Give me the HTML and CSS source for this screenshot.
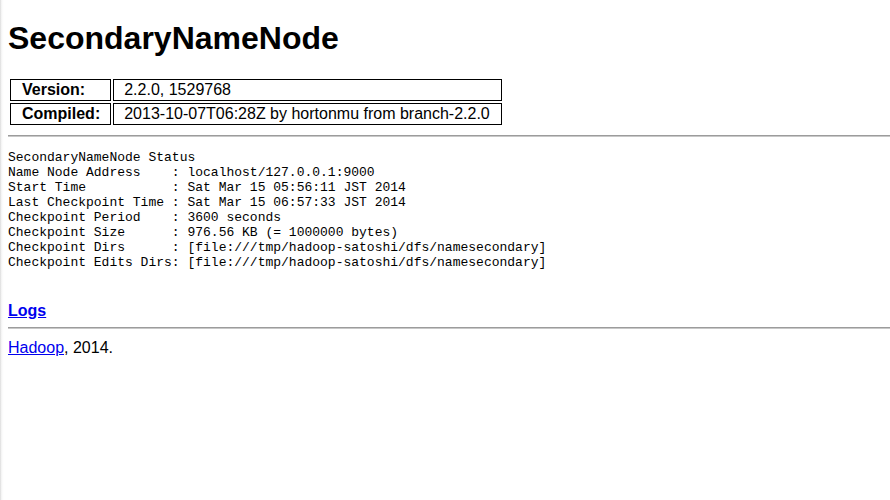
FILE: index.html
```html
<!DOCTYPE html>
<html>
<head>
<meta charset="utf-8">
<title>Hadoop SecondaryNameNode</title>
<link rel="stylesheet" href="styles.css">
</head>
<body>
<h1 class="title">SecondaryNameNode</h1>
<table class="info">
  <tr><td class="col1">Version:</td><td class="col2">2.2.0, 1529768</td></tr>
  <tr><td class="col1">Compiled:</td><td class="col2">2013-10-07T06:28Z by hortonmu from branch-2.2.0</td></tr>
</table>
<hr class="rule">
<pre class="status">SecondaryNameNode Status
Name Node Address    : localhost/127.0.0.1:9000
Start Time           : Sat Mar 15 05:56:11 JST 2014
Last Checkpoint Time : Sat Mar 15 06:57:33 JST 2014
Checkpoint Period    : 3600 seconds
Checkpoint Size      : 976.56 KB (= 1000000 bytes)
Checkpoint Dirs      : [file:///tmp/hadoop-satoshi/dfs/namesecondary]
Checkpoint Edits Dirs: [file:///tmp/hadoop-satoshi/dfs/namesecondary]</pre>
<h3 class="logs"><a href="#">Logs</a></h3>
<hr class="rule rule-foot">
<span class="footer"><a href="#">Hadoop</a>, 2014.</span>
</body>
</html>
```
FILE: styles.css
```css
html {
  background: #fff linear-gradient(to right, #d8d8d8 0, #efefef 1px, #fafafa 2px, #ffffff 4px);
}
body {
  margin: 8px 0 8px 8px;
  font-family: "Liberation Sans", Arial, Helvetica, sans-serif;
  font-size: 16px;
  color: #000;
}
a {
  color: #0000ee;
  text-decoration: underline;
}
.title {
  font-size: 32px;
  line-height: 37px;
  font-weight: bold;
  margin: 12px 0 20px;
}
.info {
  border-collapse: separate;
  border-spacing: 2px;
  border: 0;
}
.info td {
  border: 1px solid #000;
  line-height: 18px;
  white-space: pre;
}
.info td.col1 {
  font-weight: bold;
  padding: 1px 10px 1px 11px;
}
.info td.col2 {
  padding: 1px 11px 1px 10px;
}
.rule {
  border: 0;
  border-top: 1px solid #9c9c9c;
  border-bottom: 1px solid #c8c8c8;
  height: 0;
  margin: 8px 0;
}
.rule-foot {
  margin: 7px 0 10px;
}
.status {
  font-family: "Liberation Mono", "Courier New", monospace;
  font-size: 13px;
  line-height: 15px;
  margin: 13px 0 13px;
}
.logs {
  font-size: 16px;
  line-height: 18px;
  font-weight: bold;
  margin: 32px 0 0;
}
.footer {
  line-height: 18px;
}
```
